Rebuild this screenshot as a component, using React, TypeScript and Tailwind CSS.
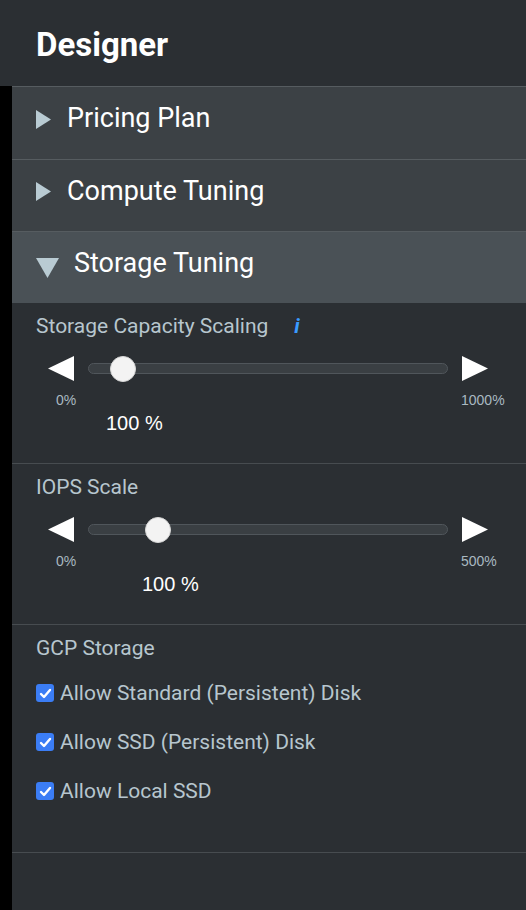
import React from 'react';

const RightTri = () => (
  <svg width="15" height="19" viewBox="0 0 15 19" className="shrink-0">
    <path d="M0 0 L15 9.5 L0 19 Z" fill="#b9cbd3" />
  </svg>
);

const DownTri = () => (
  <svg width="23" height="20" viewBox="0 0 23 20" className="shrink-0">
    <path d="M0 0 L23 0 L11.5 20 Z" fill="#b9cbd3" />
  </svg>
);

const Check = () => (
  <div className="w-[18px] h-[18px] rounded-[3px] bg-[#3b7df5] flex items-center justify-center shrink-0">
    <svg width="13" height="13" viewBox="0 0 13 13">
      <path d="M2 7 L5 10 L11 3" fill="none" stroke="#fff" strokeWidth="2.4" strokeLinecap="round" strokeLinejoin="round" />
    </svg>
  </div>
);

interface SliderProps {
  label: string;
  info?: boolean;
  max: string;
  thumbLeft: number;
  valueIndent: string;
}

const SliderSection = ({ label, info, max, thumbLeft, valueIndent }: SliderProps) => (
  <div className="border-b border-[#474c50] pt-[11px] pb-[28px] pl-6">
    <div className="flex items-center text-[21px] leading-[24px] text-[#b7c6ce]">
      {label}
      {info && <span className="ml-[26px] italic font-bold text-[#3a9bff]">i</span>}
    </div>
    {/* slider row */}
    <div className="mt-[18px] ml-3 flex items-center gap-[14px] w-[440px]">
      <svg width="26" height="25" viewBox="0 0 26 25" className="shrink-0">
        <path d="M26 0 L26 25 L0 12.5 Z" fill="#ffffff" />
      </svg>
      <div className="relative h-[11px] flex-1 rounded-full bg-[#3a3f43] border border-[#50565b]">
        <div
          className="absolute top-1/2 -translate-y-1/2 w-[26px] h-[26px] rounded-full bg-[#f3f3f3] border border-[#d8d8d8]"
          style={{ left: thumbLeft }}
        />
      </div>
      <svg width="26" height="25" viewBox="0 0 26 25" className="shrink-0">
        <path d="M0 0 L0 25 L26 12.5 Z" fill="#ffffff" />
      </svg>
    </div>
    <div className="mt-[11px] ml-5 flex text-[14px] leading-[16px] text-[#a9b9c1] font-['Liberation_Sans',Arial,sans-serif]">
      <span className="w-[405px]">0%</span>
      <span>{max}</span>
    </div>
    <div className={`mt-[3px] text-[20px] leading-[24px] text-white font-['Liberation_Sans',Arial,sans-serif] ${valueIndent}`}>
      100 %
    </div>
  </div>
);

const AccordionRow = ({ title, open, first }: { title: string; open?: boolean; first?: boolean }) => (
  <div
    className={`border-t border-[#565c60] flex items-center pl-6 pb-[10px] ${first ? 'h-[73px]' : 'h-[72px]'} ${
      open ? 'bg-[#4a5156] gap-[15px]' : 'bg-[#3c4145] gap-4'
    }`}
  >
    <div className={open ? 'pt-[10px]' : 'pt-[2px]'}>{open ? <DownTri /> : <RightTri />}</div>
    <span className="text-[27px] text-white leading-[32px]">{title}</span>
  </div>
);

export default function App() {
  return (
    <div className="w-[526px] h-[910px] bg-[#2b2f33] flex flex-col font-['Roboto','Liberation_Sans',sans-serif] overflow-hidden">
      <div className="h-[86px] shrink-0 flex items-center pl-9 pt-[4px]">
        <span className="text-[33px] font-bold text-white leading-[40px]">Designer</span>
      </div>
      <div className="flex flex-1">
        <div className="w-3 bg-black" />
        <div className="flex-1 flex flex-col">
          <AccordionRow title="Pricing Plan" first />
          <AccordionRow title="Compute Tuning" />
          <AccordionRow title="Storage Tuning" open />

          <SliderSection label="Storage Capacity Scaling" info max="1000%" thumbLeft={21} valueIndent="ml-[70px]" />
          <SliderSection label="IOPS Scale" max="500%" thumbLeft={56} valueIndent="ml-[106px]" />

          {/* GCP storage options */}
          <div className="border-b border-[#474c50] pt-[11px] pb-[47px] pl-6">
            <div className="text-[21px] leading-[24px] text-[#b7c6ce]">GCP Storage</div>
            <div className="mt-[19px] flex flex-col gap-[21px]">
              {['Allow Standard (Persistent) Disk', 'Allow SSD (Persistent) Disk', 'Allow Local SSD'].map((t) => (
                <div key={t} className="flex items-center gap-[6px] h-[28px]">
                  <Check />
                  <span className="text-[21px] leading-[28px] text-[#b7c6ce]">{t}</span>
                </div>
              ))}
            </div>
          </div>
        </div>
      </div>
    </div>
  );
}
